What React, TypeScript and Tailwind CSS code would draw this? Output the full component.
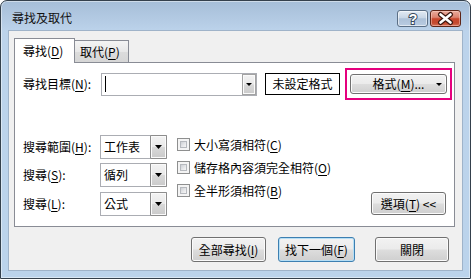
import React from "react";

function Acc({ pre, k, post = "" }: { pre: string; k: string; post?: string }) {
  return (
    <span className="whitespace-nowrap">
      {pre}(<span className="underline decoration-1 underline-offset-[2px]">{k}</span>){post}
    </span>
  );
}

const btn =
  "rounded-[3px] border border-[#707070] bg-[linear-gradient(to_bottom,#f2f2f2_0%,#ebebeb_48%,#dddddd_52%,#cfcfcf_100%)] shadow-[inset_0_0_0_1px_#fbfbfb] flex items-center justify-center";

function Tri({ w = 7, h = 4 }: { w?: number; h?: number }) {
  return (
    <svg width={w} height={h} viewBox={`0 0 ${w} ${h}`}>
      <polygon points={`0,0 ${w},0 ${w / 2},${h}`} fill="#000" />
    </svg>
  );
}

function Combo({ text }: { text: string }) {
  return (
    <div className="w-[67px] h-[24px] border border-[#abadb3] bg-white flex items-stretch">
      <div className="flex-1 pl-[3px] flex items-center">{text}</div>
      <div className="w-[17px] -my-px -mr-px border border-[#8d8d8d] rounded-[1px] bg-[linear-gradient(to_bottom,#f3f3f3_0%,#e9e9e9_48%,#d8d8d8_52%,#cacaca_100%)] shadow-[inset_0_0_0_1px_#fafafa] flex items-center justify-center">
        <Tri />
      </div>
    </div>
  );
}

function Check({ children }: { children: React.ReactNode }) {
  return (
    <div className="h-[23px] flex items-center">
      <div className="w-[13px] h-[13px] border border-[#8e8f8f] bg-[#f4f4f4] p-[2px]">
        <div className="w-full h-full border border-[#b6b9be] bg-[linear-gradient(135deg,#cdd0d5_0%,#e8e9eb_60%,#f6f6f6_100%)]" />
      </div>
      <div className="ml-[4px]">{children}</div>
    </div>
  );
}

export default function App() {
  return (
    <div className="w-[471px] h-[279px] font-['Noto_Sans_CJK_TC',sans-serif] text-[12px] leading-[16px] text-black">
      <div className="h-full rounded-t-[7px] border border-[#34404c] bg-[linear-gradient(to_bottom,#a6bed8_0px,#b3cae3_18px,#bcd3eb_30px,#bbd3eb_100%)] shadow-[inset_0_0_0_1px_rgba(255,255,255,0.45)] flex flex-col">
        {/* title bar */}
        <div className="h-[29px] flex items-start">
          <div className="ml-[11px] mt-[9px] text-[#111]">尋找及取代</div>
          <div className="ml-auto mt-[9px] mr-[9px] flex gap-[2px]">
            <div className="w-[31px] h-[17px] rounded-[3px] border border-[#5b6f86] bg-[linear-gradient(to_bottom,#e2eaf3_0%,#c8d6e6_45%,#adc1d8_52%,#b9cce2_100%)] shadow-[inset_0_0_0_1px_rgba(255,255,255,0.55)] flex items-center justify-center">
              <svg width="14" height="15" viewBox="0 0 14 15">
                <text
                  x="7"
                  y="12.5"
                  textAnchor="middle"
                  fontFamily="Liberation Sans, sans-serif"
                  fontWeight="bold"
                  fontSize="14"
                  fill="#fff"
                  stroke="#3b4b5e"
                  strokeWidth="2"
                  paintOrder="stroke"
                >
                  ?
                </text>
              </svg>
            </div>
            <div className="w-[31px] h-[17px] rounded-[3px] border border-[#5e2517] bg-[linear-gradient(to_bottom,#e9ab9c_0%,#dc8370_42%,#c8472d_52%,#c44a2f_80%,#d6735a_100%)] shadow-[inset_0_0_0_1px_rgba(255,220,210,0.45)] flex items-center justify-center">
              <svg width="29" height="15" viewBox="0 0 29 15">
                <path d="M9.5 3.5 L19.5 11.5 M19.5 3.5 L9.5 11.5" stroke="#3d1810" strokeWidth="5" strokeLinecap="round" />
                <path d="M9.5 3.5 L19.5 11.5 M19.5 3.5 L9.5 11.5" stroke="#fff" strokeWidth="2.6" strokeLinecap="round" />
              </svg>
            </div>
          </div>
        </div>

        {/* client */}
        <div className="flex-1 mx-[7px] mb-[7px] border border-[#9fb3c9] bg-[#f0f0f0] flex flex-col pt-[7px] pl-[5px] pr-[7px]">
          {/* tabs */}
          <div className="h-[24px] flex items-end">
            <div className="relative z-10 -mb-px w-[61px] h-[25px] border border-b-0 border-[#898c95] bg-white pl-[8px] pt-[4px]">
              <Acc pre="尋找" k="D" />
            </div>
            <div className="w-[54px] h-[22px] border border-b-0 border-l-0 border-[#898c95] bg-[linear-gradient(to_bottom,#f4f4f4_0%,#e8e8e8_50%,#dcdcdc_52%,#d6d6d6_100%)] pl-[5px] pt-[3px]">
              <Acc pre="取代" k="P" />
            </div>
          </div>

          {/* panel */}
          <div className="w-[441px] h-[165px] border border-[#898c95] bg-white flex flex-col">
            <div className="mt-[5px] pl-[8px] h-[32px] flex items-center">
              <div className="w-[78px]">
                <Acc pre="尋找目標" k="N" post=":" />
              </div>
              <div className="w-[156px] h-[23px] border border-[#abadb3] bg-white flex items-stretch">
                <div className="ml-[3px] w-px h-[16px] bg-black self-center" />
                <div className="ml-auto w-[14px] border border-[#a3a3a3] bg-[linear-gradient(to_bottom,#f3f3f3_0%,#e9e9e9_48%,#d8d8d8_52%,#cacaca_100%)] shadow-[inset_0_0_0_1px_#fafafa] flex items-center justify-center">
                  <Tri w={6} h={3} />
                </div>
              </div>
              <div className="ml-[8px] w-[75px] h-[22px] border border-black flex items-center justify-center">
                未設定格式
              </div>
              <div className="ml-[5px] w-[107px] h-[32px] border-2 border-[#e5007e] flex items-center justify-center">
                <div className={`${btn} relative w-[97px] h-[20px]`}>
                  <Acc pre="格式" k="M" post="..." />
                  <div className="absolute right-[4px] top-[8px] flex">
                    <Tri w={6} h={3} />
                  </div>
                </div>
              </div>
            </div>

            <div className="mt-[33px] pl-[8px] pr-[8px] flex">
              <div className="pt-[2px] flex flex-col">
                <div className="h-[24px] flex items-center">
                  <div className="w-[77px]">
                    <Acc pre="搜尋範圍" k="H" post=":" />
                  </div>
                  <Combo text="工作表" />
                </div>
                <div className="mt-[4px] h-[24px] flex items-center">
                  <div className="w-[77px]">
                    <Acc pre="搜尋" k="S" post=":" />
                  </div>
                  <Combo text="循列" />
                </div>
                <div className="mt-[5px] h-[24px] flex items-center">
                  <div className="w-[77px]">
                    <Acc pre="搜尋" k="L" post=":" />
                  </div>
                  <Combo text="公式" />
                </div>
              </div>
              <div className="ml-[10px] flex flex-col">
                <Check>
                  <Acc pre="大小寫須相符" k="C" />
                </Check>
                <Check>
                  <Acc pre="儲存格內容須完全相符" k="O" />
                </Check>
                <Check>
                  <Acc pre="全半形須相符" k="B" />
                </Check>
              </div>
              <div className={`${btn} ml-auto self-end mb-[1px] w-[75px] h-[23px]`}>
                <Acc pre="選項" k="T" post=" <<" />
              </div>
            </div>
          </div>

          {/* bottom buttons */}
          <div className="mt-[10px] h-[25px] flex justify-end pr-[6px]">
            <div className={`${btn} w-[75px] h-[25px]`}>
              <Acc pre="全部尋找" k="I" />
            </div>
            <div className="ml-[12px] w-[77px] h-[25px] rounded-[3px] border border-[#3c7fb1] bg-[linear-gradient(to_bottom,#f2f2f2_0%,#ebebeb_48%,#dddddd_52%,#cfcfcf_100%)] shadow-[inset_0_0_0_1px_#b5def5] flex items-center justify-center">
              <Acc pre="找下一個" k="F" />
            </div>
            <div className={`${btn} ml-[20px] w-[74px] h-[25px]`}>關閉</div>
          </div>
        </div>
      </div>
    </div>
  );
}
